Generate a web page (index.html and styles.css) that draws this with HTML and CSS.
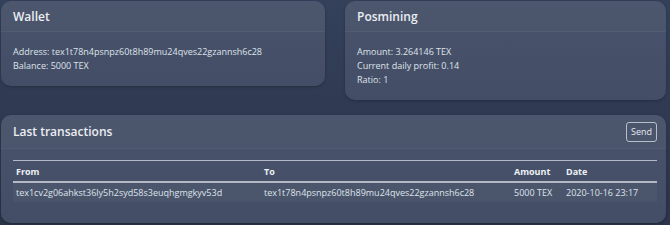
FILE: index.html
```html
<!DOCTYPE html>
<html>
<head>
<meta charset="utf-8">
<link rel="stylesheet" href="styles.css">
</head>
<body>
<div class="page">
  <div class="row">
    <div class="card">
      <div class="card-header"><h2 class="title">Wallet</h2></div>
      <div class="card-body">
        <div class="line">Address: tex1t78n4psnpz60t8h89mu24qves22gzannsh6c28</div>
        <div class="line">Balance: 5000 TEX</div>
      </div>
    </div>
    <div class="card">
      <div class="card-header"><h2 class="title">Posmining</h2></div>
      <div class="card-body">
        <div class="line">Amount: 3.264146 TEX</div>
        <div class="line">Current daily profit: 0.14</div>
        <div class="line">Ratio: 1</div>
      </div>
    </div>
  </div>
  <div class="card tx">
    <div class="card-header split"><h2 class="title">Last transactions</h2><button class="btn">Send</button></div>
    <div class="card-body table-body">
      <table class="table">
        <thead>
          <tr><th class="c-from">From</th><th class="c-to">To</th><th class="c-amt">Amount</th><th>Date</th></tr>
        </thead>
        <tbody>
          <tr><td>tex1cv2g06ahkst36ly5h2syd58s3euqhgmgkyv53d</td><td>tex1t78n4psnpz60t8h89mu24qves22gzannsh6c28</td><td>5000 TEX</td><td>2020-10-16 23:17</td></tr>
        </tbody>
      </table>
    </div>
  </div>
</div>
</body>
</html>
```
FILE: styles.css
```css
html, body {
  margin: 0;
  height: 100%;
}
body {
  background: linear-gradient(180deg, #34415b 0%, #2b3449 100%);
  font-family: "Open Sans", "Noto Sans", sans-serif;
  color: #dfe3ea;
  font-size: 9px;
}
.page {
  padding: 1px 4px 0 1px;
}
.row {
  display: grid;
  grid-template-columns: 324px 1fr;
  column-gap: 20px;
  align-items: start;
  margin-bottom: 15px;
}
.card {
  background: linear-gradient(180deg, #49546c 0%, #434e66 100%);
  border-radius: 10px;
  box-shadow: 0 1px 3px rgba(0,0,0,0.25);
  overflow: hidden;
}
.card-header {
  height: 31px;
  box-sizing: border-box;
  padding: 0 12px;
  display: flex;
  align-items: center;
  border-bottom: 1px solid rgba(255,255,255,0.04);
  background: rgba(255,255,255,0.02);
}
.title {
  margin: 0;
  font-size: 12px;
  font-weight: 600;
  color: #eceef2;
}
.card-body {
  padding: 13px 12px 13px;
}
.line {
  line-height: 14px;
}
.split {
  justify-content: space-between;
  height: 34px;
  padding-right: 9px;
}
.btn {
  font-family: inherit;
  font-size: 9px;
  color: #e6e9ee;
  background: transparent;
  border: 1px solid #b8bec9;
  border-radius: 3px;
  width: 31px;
  height: 20px;
  padding: 0;
}
.tx .card-body {
  padding: 11px 9px 21px 12px;
}
.table {
  width: 100%;
  border-collapse: collapse;
  border-top: 1.5px solid #b3bac6;
}
.table th {
  text-align: left;
  font-weight: 700;
  height: 20px;
  padding: 0 3px;
  border-bottom: 2px solid #b3bac6;
  color: #eef0f4;
}
.table td {
  height: 19px;
  padding: 0 3px;
  background: rgba(255,255,255,0.035);
}
.c-from { width: 242px; }
.c-to { width: 244px; }
.c-amt { width: 46px; }
```
